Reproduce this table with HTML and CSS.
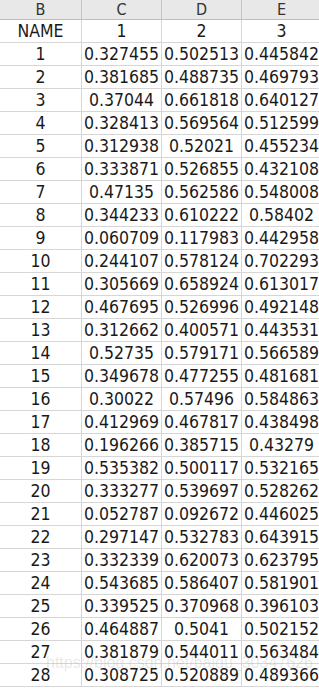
FILE: index.html
```html
<!DOCTYPE html>
<html>
<head>
<meta charset="utf-8">
<link rel="stylesheet" href="styles.css">
</head>
<body>
<div class="sheet">
  <div class="row head"><div class="c">B</div><div class="c">C</div><div class="c">D</div><div class="c">E</div></div>
  <div class="row"><div class="c">NAME</div><div class="c">1</div><div class="c">2</div><div class="c">3</div></div>
  <div class="row"><div class="c">1</div><div class="c">0.327455</div><div class="c">0.502513</div><div class="c">0.445842</div></div>
  <div class="row"><div class="c">2</div><div class="c">0.381685</div><div class="c">0.488735</div><div class="c">0.469793</div></div>
  <div class="row"><div class="c">3</div><div class="c">0.37044</div><div class="c">0.661818</div><div class="c">0.640127</div></div>
  <div class="row"><div class="c">4</div><div class="c">0.328413</div><div class="c">0.569564</div><div class="c">0.512599</div></div>
  <div class="row"><div class="c">5</div><div class="c">0.312938</div><div class="c">0.52021</div><div class="c">0.455234</div></div>
  <div class="row"><div class="c">6</div><div class="c">0.333871</div><div class="c">0.526855</div><div class="c">0.432108</div></div>
  <div class="row"><div class="c">7</div><div class="c">0.47135</div><div class="c">0.562586</div><div class="c">0.548008</div></div>
  <div class="row"><div class="c">8</div><div class="c">0.344233</div><div class="c">0.610222</div><div class="c">0.58402</div></div>
  <div class="row"><div class="c">9</div><div class="c">0.060709</div><div class="c">0.117983</div><div class="c">0.442958</div></div>
  <div class="row"><div class="c">10</div><div class="c">0.244107</div><div class="c">0.578124</div><div class="c">0.702293</div></div>
  <div class="row"><div class="c">11</div><div class="c">0.305669</div><div class="c">0.658924</div><div class="c">0.613017</div></div>
  <div class="row"><div class="c">12</div><div class="c">0.467695</div><div class="c">0.526996</div><div class="c">0.492148</div></div>
  <div class="row"><div class="c">13</div><div class="c">0.312662</div><div class="c">0.400571</div><div class="c">0.443531</div></div>
  <div class="row"><div class="c">14</div><div class="c">0.52735</div><div class="c">0.579171</div><div class="c">0.566589</div></div>
  <div class="row"><div class="c">15</div><div class="c">0.349678</div><div class="c">0.477255</div><div class="c">0.481681</div></div>
  <div class="row"><div class="c">16</div><div class="c">0.30022</div><div class="c">0.57496</div><div class="c">0.584863</div></div>
  <div class="row"><div class="c">17</div><div class="c">0.412969</div><div class="c">0.467817</div><div class="c">0.438498</div></div>
  <div class="row"><div class="c">18</div><div class="c">0.196266</div><div class="c">0.385715</div><div class="c">0.43279</div></div>
  <div class="row"><div class="c">19</div><div class="c">0.535382</div><div class="c">0.500117</div><div class="c">0.532165</div></div>
  <div class="row"><div class="c">20</div><div class="c">0.333277</div><div class="c">0.539697</div><div class="c">0.528262</div></div>
  <div class="row"><div class="c">21</div><div class="c">0.052787</div><div class="c">0.092672</div><div class="c">0.446025</div></div>
  <div class="row"><div class="c">22</div><div class="c">0.297147</div><div class="c">0.532783</div><div class="c">0.643915</div></div>
  <div class="row"><div class="c">23</div><div class="c">0.332339</div><div class="c">0.620073</div><div class="c">0.623795</div></div>
  <div class="row"><div class="c">24</div><div class="c">0.543685</div><div class="c">0.586407</div><div class="c">0.581901</div></div>
  <div class="row"><div class="c">25</div><div class="c">0.339525</div><div class="c">0.370968</div><div class="c">0.396103</div></div>
  <div class="row"><div class="c">26</div><div class="c">0.464887</div><div class="c">0.5041</div><div class="c">0.502152</div></div>
  <div class="row"><div class="c">27</div><div class="c">0.381879</div><div class="c">0.544011</div><div class="c">0.563484</div></div>
  <div class="row"><div class="c">28</div><div class="c">0.308725</div><div class="c">0.520889</div><div class="c">0.489366</div></div>
  <div class="watermark">https://blog.csdn.net/baidu_30347626</div>
</div>
</body>
</html>
```
FILE: styles.css
```css
html, body {
  margin: 0;
  padding: 0;
  background: #ffffff;
  overflow: hidden;
}
.sheet {
  position: relative;
  width: 319px;
  height: 689px;
  overflow: hidden;
  font-family: "DejaVu Sans Condensed", "DejaVu Sans", sans-serif;
  font-stretch: condensed;
  color: #1a1a1a;
}
.row {
  display: grid;
  grid-template-columns: 82px 80px 80px 80px;
  height: 23px;
  font-size: 17.5px;
}
.c {
  box-sizing: border-box;
  border-right: 1px solid #d6d6d6;
  border-bottom: 1px solid #d6d6d6;
  display: flex;
  align-items: center;
  justify-content: center;
  white-space: nowrap;
  line-height: 1;
  padding-top: 1px;
}
.head {
  height: 20px;
  background: #e8e8e8;
  font-size: 16px;
  color: #333333;
}
.head .c {
  border-right-color: #c4c4c4;
  border-bottom-color: #bdbdbd;
  padding-top: 0;
}
.watermark {
  position: absolute;
  left: 46px;
  top: 655px;
  font-family: "Liberation Sans", sans-serif;
  font-size: 16px;
  line-height: 1;
  color: rgba(150, 150, 150, 0.22);
  white-space: nowrap;
  pointer-events: none;
}
```
